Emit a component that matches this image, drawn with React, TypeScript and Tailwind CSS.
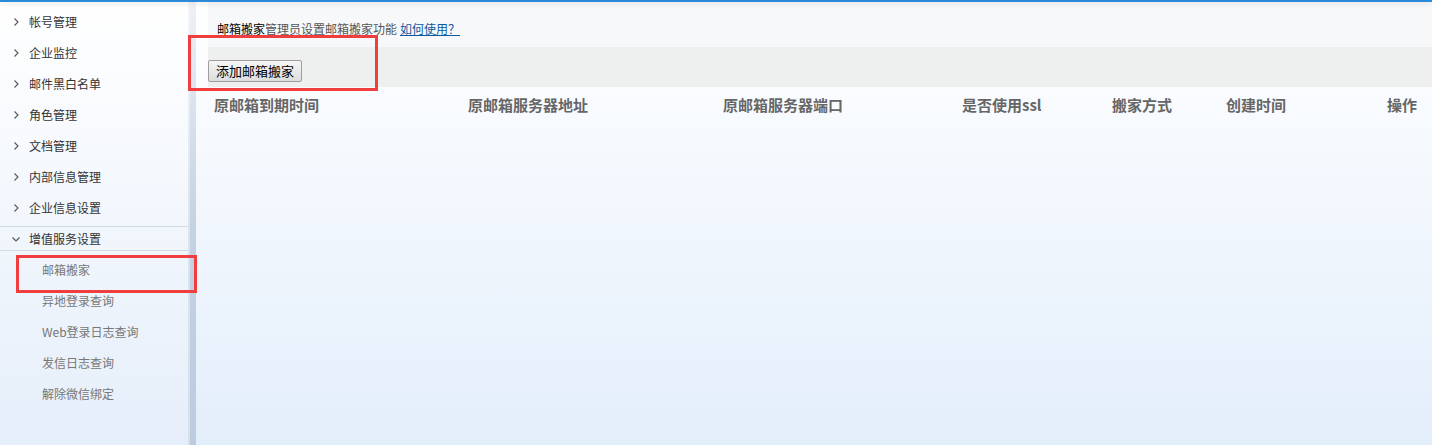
import React from "react";

const menu = [
  "帐号管理",
  "企业监控",
  "邮件黑白名单",
  "角色管理",
  "文档管理",
  "内部信息管理",
  "企业信息设置",
];

const subMenu = ["邮箱搬家", "异地登录查询", "Web登录日志查询", "发信日志查询", "解除微信绑定"];

const columns = [
  { label: "原邮箱到期时间", w: "w-[254px]" },
  { label: "原邮箱服务器地址", w: "w-[255px]" },
  { label: "原邮箱服务器端口", w: "w-[239px]" },
  { label: "是否使用ssl", w: "w-[150px]" },
  { label: "搬家方式", w: "w-[114px]" },
  { label: "创建时间", w: "w-[161px]" },
  { label: "操作", w: "shrink-0" },
];

function Chevron({ down }: { down?: boolean }) {
  return (
    <svg width="8" height="8" viewBox="0 0 8 8" className="shrink-0">
      {down ? (
        <polyline points="0.5,2.5 4,6 7.5,2.5" fill="none" stroke="#555" strokeWidth="1.1" />
      ) : (
        <polyline points="2.5,0.5 6,4 2.5,7.5" fill="none" stroke="#555" strokeWidth="1.1" />
      )}
    </svg>
  );
}

export default function App() {
  const font = { fontFamily: '"Noto Sans CJK SC", "Noto Sans", sans-serif' };
  return (
    <div className="relative w-full h-[445px] flex flex-col overflow-hidden bg-white" style={font}>
      <div className="h-[2px] bg-[#2a8ad8] shrink-0 shadow-[0_2px_5px_rgba(0,0,0,0.12)] relative z-10" />
      <div className="flex flex-1 min-h-0">
        {/* sidebar */}
        <aside className="w-[188px] shrink-0 pt-[4px] bg-gradient-to-b from-white to-[#e5eefa] text-[12px] text-[#333]">
          {menu.map((m) => (
            <div key={m} className="h-[31px] flex items-center gap-[9px] pl-[12px]">
              <Chevron />
              <span>{m}</span>
            </div>
          ))}
          <div className="my-[3px] h-[25px] flex items-center gap-[9px] pl-[12px] border-y border-[#d3dbe5]">
            <Chevron down />
            <span>增值服务设置</span>
          </div>
          {subMenu.map((s) => (
            <div key={s} className="h-[31px] flex items-center pl-[42px] text-[#777]">
              {s}
            </div>
          ))}
        </aside>
        <div className="w-[8px] shrink-0 bg-gradient-to-b from-[#eef1f5] via-[#c4d2e2] to-[#bccbde] relative">
          <div className="absolute inset-y-0 left-0 w-[2px] bg-white/40" />
        </div>

        {/* main */}
        <main className="flex-1 min-w-0 pl-[12px] bg-gradient-to-b from-white to-[#e3eefb]">
          <div className="h-[45px] bg-[#f7f8fa] flex items-end pb-[12px] pl-[9px] text-[12px] leading-none">
            <span className="text-black">邮箱搬家</span>
            <span className="text-[#555]">管理员设置邮箱搬家功能</span>
            <a className="ml-[3px] text-[#0b5aa0] underline">如何使用？</a>
          </div>
          <div className="h-[40px] bg-[#edf0ee] pt-[10px]">
            <button className="h-[22px] w-[94px] border border-[#9d9d9d] rounded-[2px] bg-gradient-to-b from-[#f6f6f6] to-[#dddddd] text-[13px] text-black leading-none">
              添加邮箱搬家
            </button>
          </div>
          <div className="flex items-center h-[36px] pl-[6px] text-[15px] font-bold text-[#666] whitespace-nowrap">
            {columns.map((c) => (
              <div key={c.label} className={c.w}>
                {c.label}
              </div>
            ))}
          </div>
        </main>
      </div>

      {/* annotation boxes */}
      <div className="absolute left-[188px] top-[35px] w-[190px] h-[56px] border-[3px] border-[#f03d3d] pointer-events-none" />
      <div className="absolute left-[16px] top-[255px] w-[181px] h-[38px] border-[3px] border-[#f03d3d] pointer-events-none" />
    </div>
  );
}
